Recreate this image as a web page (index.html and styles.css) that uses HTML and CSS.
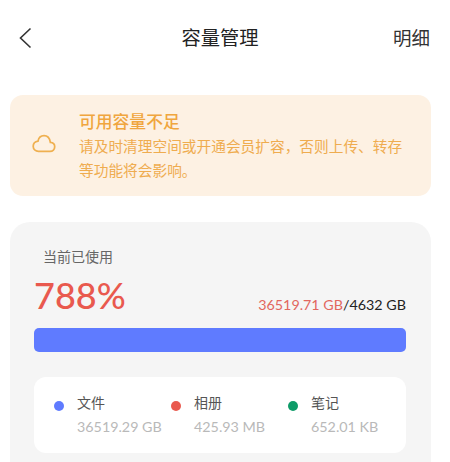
FILE: index.html
```html
<!DOCTYPE html>
<html lang="zh-CN">
<head>
<meta charset="UTF-8">
<meta name="viewport" content="width=device-width, initial-scale=1.0">
<title>容量管理</title>
<link rel="stylesheet" href="styles.css">
</head>
<body>
  <div class="page">
    <!-- Header -->
    <div class="header">
      <svg class="back" width="14" height="22" viewBox="0 0 14 22"><path d="M12.5 1.5 L2.5 11 L12.5 20.5" fill="none" stroke="#333" stroke-width="1.6"/></svg>
      <div class="title">容量管理</div>
      <div class="detail">明细</div>
    </div>

    <!-- Warning banner -->
    <div class="banner">
      <svg class="cloud" width="24" height="19" viewBox="0 0 26 20"><path d="M7 18.5 H19.5 C22.5 18.5 24.6 16.4 24.6 13.6 C24.6 10.9 22.6 8.9 19.9 8.8 C19.2 4.6 16.6 1.6 13 1.6 C9.6 1.6 7.2 4 6.5 7.4 C3.4 7.8 1.3 10.2 1.3 13.1 C1.3 16.2 3.8 18.5 7 18.5 Z" fill="none" stroke="#efb050" stroke-width="1.9"/></svg>
      <div class="banner-text">
        <div class="banner-title">可用容量不足</div>
        <div class="banner-desc">请及时清理空间或开通会员扩容，否则上传、转存等功能将会影响。</div>
      </div>
    </div>

    <!-- Usage card -->
    <div class="card">
      <div class="used-label">当前已使用</div>
      <div class="used-row">
        <div class="percent">788%</div>
        <div class="amount"><span class="amount-used">36519.71 GB</span>/4632 GB</div>
      </div>
      <div class="bar"></div>
      <div class="breakdown">
        <div class="item">
          <span class="dot dot-blue"></span>
          <div>
            <div class="item-name">文件</div>
            <div class="item-size">36519.29 GB</div>
          </div>
        </div>
        <div class="item">
          <span class="dot dot-red"></span>
          <div>
            <div class="item-name">相册</div>
            <div class="item-size">425.93 MB</div>
          </div>
        </div>
        <div class="item">
          <span class="dot dot-green"></span>
          <div>
            <div class="item-name">笔记</div>
            <div class="item-size">652.01 KB</div>
          </div>
        </div>
      </div>
    </div>
  </div>
</body>
</html>
```

FILE: styles.css
```css
html, body {
  margin: 0;
  height: 100%;
  overflow: hidden;
  background: #fff;
}
body {
  font-family: Lato, "Noto Sans CJK SC", sans-serif;
}
.page {
  padding: 0 19px 0 10px;
}
.header {
  display: flex;
  align-items: center;
  justify-content: space-between;
  height: 46px;
  padding: 14px 1px 0 8px;
}
.back {
  display: block;
  margin-top: 2px;
}
.title {
  font-size: 19.3px;
  color: #222;
  margin-left: 15px;
}
.detail {
  font-size: 18.5px;
  color: #333;
}
.banner {
  display: flex;
  align-items: center;
  margin-top: 35px;
  height: 101px;
  background: #fdf1e3;
  border-radius: 13px;
  box-sizing: border-box;
  padding: 0 24px 0 22px;
  color: #f0ad4e;
}
.cloud {
  flex: none;
  margin: 0 23px 4px 0;
}
.banner-title {
  font-size: 16.8px;
  font-weight: 500;
  line-height: 24px;
  color: #f0a63e;
}
.banner-desc {
  font-size: 14.7px;
  line-height: 24px;
  color: #efac4f;
}
.card {
  margin-top: 26px;
  height: 260px;
  background: #f5f5f5;
  border-radius: 20px 20px 0 0;
  box-sizing: border-box;
  padding: 25px 25px 0 24px;
}
.used-label {
  font-size: 14px;
  line-height: 20px;
  color: #666;
  padding-left: 9px;
}
.used-row {
  display: flex;
  justify-content: space-between;
  align-items: flex-end;
  margin-top: 7px;
  height: 42px;
}
.percent {
  font-size: 36px;
  font-weight: 500;
  line-height: 42px;
  color: #e9594e;
}
.amount {
  font-size: 14.3px;
  line-height: 20px;
  color: #222;
  margin-bottom: 1px;
}
.amount-used {
  color: #e2675e;
}
.bar {
  height: 24px;
  margin-top: 12px;
  background: #5f7bff;
  border-radius: 5px;
}
.breakdown {
  display: grid;
  grid-template-columns: 117px 117px 1fr;
  margin-top: 25px;
  height: 76px;
  background: #fff;
  border-radius: 12px;
  box-sizing: border-box;
  padding: 15px 0 0 20px;
}
.item {
  display: flex;
  align-items: flex-start;
}
.dot {
  width: 10px;
  height: 10px;
  border-radius: 50%;
  margin: 9px 13px 0 0;
  flex: none;
}
.dot-blue {
  background: #5f7bff;
}
.dot-red {
  background: #e9594e;
}
.dot-green {
  background: #0e9b68;
}
.item-name {
  font-size: 14px;
  line-height: 21px;
  color: #555;
}
.item-size {
  font-size: 14.3px;
  line-height: 24px;
  margin-top: 2px;
  color: #b9b9b9;
  white-space: nowrap;
}
```
